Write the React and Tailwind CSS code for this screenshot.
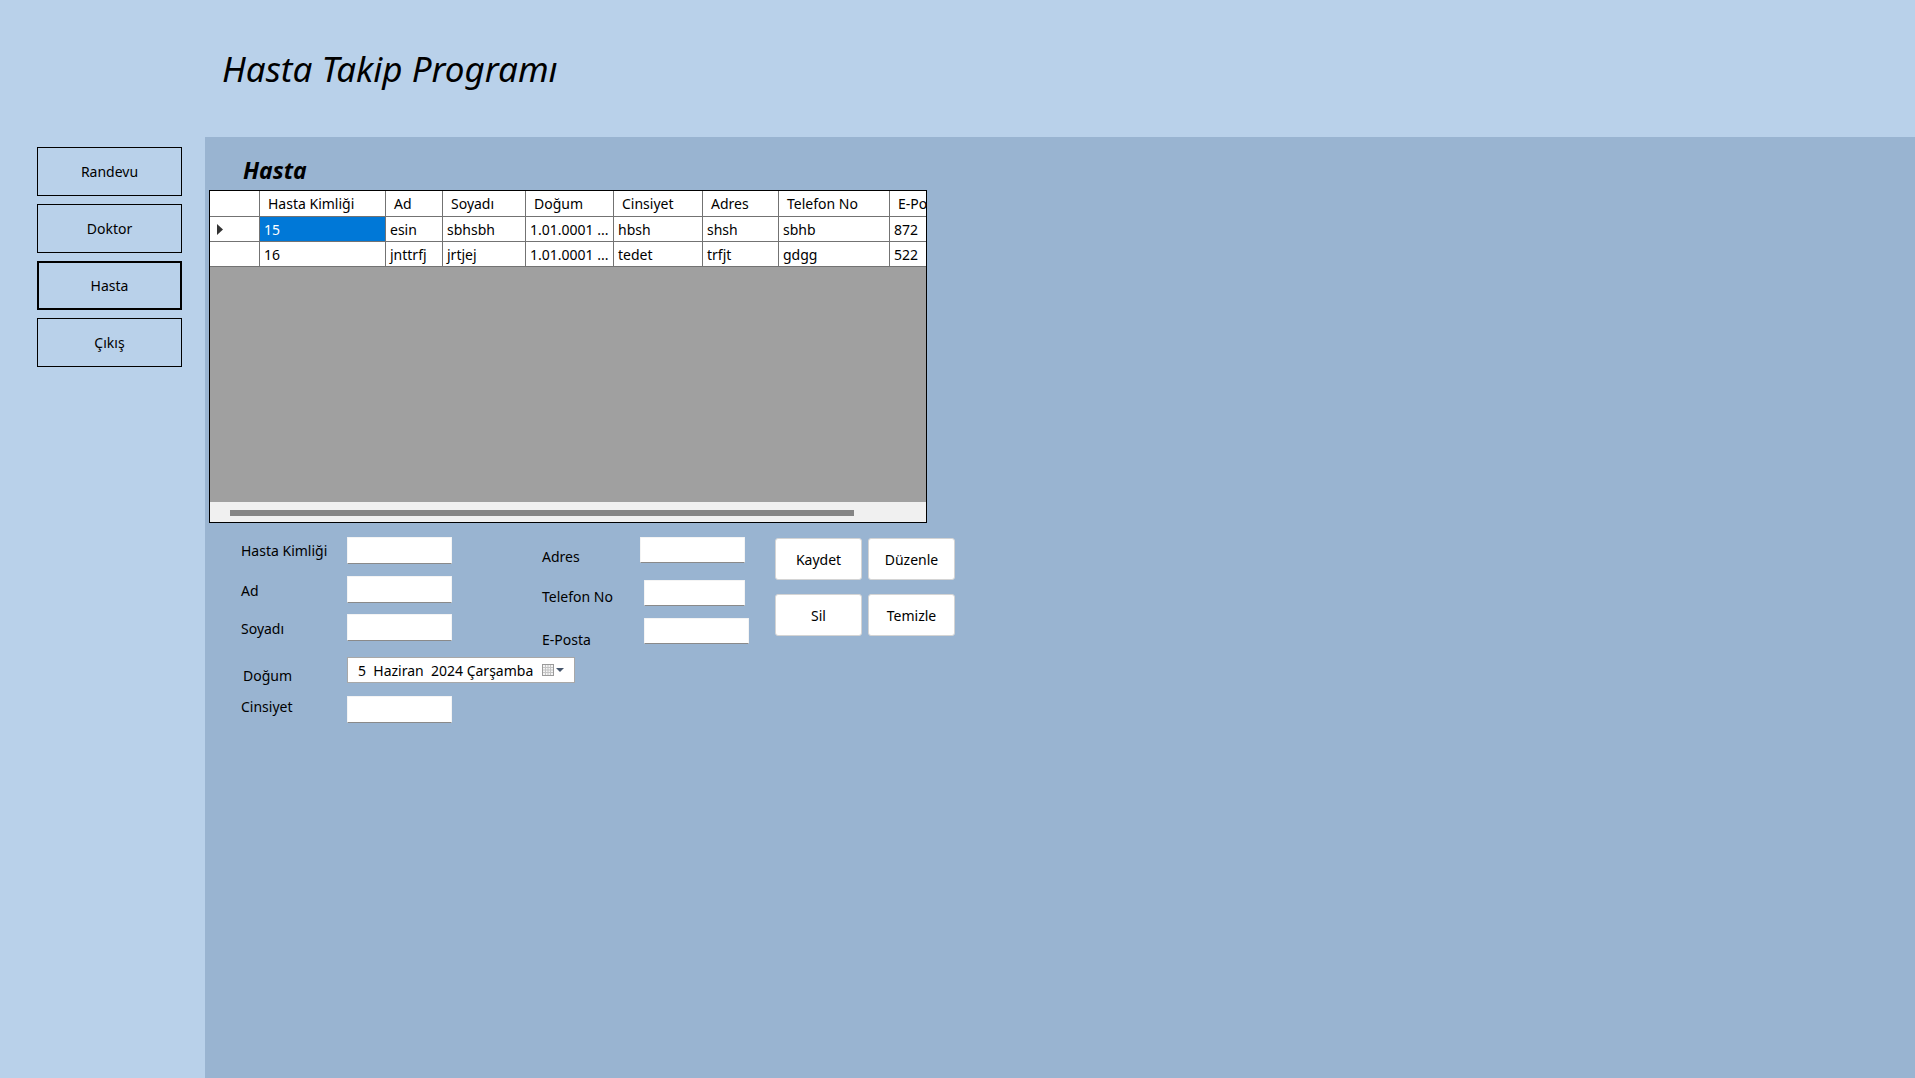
import React from "react";

const cols = [
  { key: "id", label: "Hasta Kimliği", w: 126 },
  { key: "ad", label: "Ad", w: 57 },
  { key: "soyad", label: "Soyadı", w: 83 },
  { key: "dogum", label: "Doğum", w: 88 },
  { key: "cins", label: "Cinsiyet", w: 89 },
  { key: "adres", label: "Adres", w: 76 },
  { key: "tel", label: "Telefon No", w: 111 },
  { key: "mail", label: "E-Posta", w: 100 },
];

const rows = [
  { id: "15", ad: "esin", soyad: "sbhsbh", dogum: "1.01.0001 ...", cins: "hbsh", adres: "shsh", tel: "sbhb", mail: "872" },
  { id: "16", ad: "jnttrfj", soyad: "jrtjej", dogum: "1.01.0001 ...", cins: "tedet", adres: "trfjt", tel: "gdgg", mail: "522" },
];

function NavButton({ children, active }) {
  return (
    <button
      className={
        "w-[145px] h-[49px] flex items-center justify-center text-[14px] text-black bg-transparent " +
        (active ? "border-2 border-black" : "border border-black")
      }
    >
      {children}
    </button>
  );
}

function TextBox({ w = 105, h = 27 }) {
  return (
    <div
      style={{ width: w, height: h }}
      className="bg-white border border-[#f4f4f4] border-b-[#8a8a8a] rounded-[1px] shrink-0"
    />
  );
}

function ActionButton({ children }) {
  return (
    <button className="w-[87px] h-[42px] bg-white border border-[#d4d4d4] rounded-[3px] text-[14px] text-black flex items-center justify-center">
      {children}
    </button>
  );
}

function DataGrid() {
  return (
    <div className="ml-[4px] w-[718px] h-[333px] border border-black bg-white flex flex-col overflow-hidden">
      {/* header */}
      <div className="flex h-[26px] shrink-0 border-b border-[#737373]">
        <div className="w-[50px] shrink-0 border-r border-[#737373]" />
        {cols.map((c) => (
          <div
            key={c.key}
            style={{ width: c.w }}
            className="shrink-0 border-r border-[#737373] pl-[8px] flex items-center whitespace-nowrap overflow-hidden text-[14px]"
          >
            {c.label}
          </div>
        ))}
      </div>
      {rows.map((r, i) => (
        <div key={r.id} className="flex h-[25px] shrink-0 border-b border-[#737373]">
          <div className="w-[50px] shrink-0 border-r border-[#737373] flex items-center pl-[7px]">
            {i === 0 && (
              <svg width="6" height="11" viewBox="0 0 6 11">
                <path d="M0 0 L6 5.5 L0 11 Z" fill="#333" />
              </svg>
            )}
          </div>
          {cols.map((c) => (
            <div
              key={c.key}
              style={{ width: c.w }}
              className={
                "shrink-0 border-r border-[#737373] pl-[4px] flex items-center whitespace-nowrap overflow-hidden text-[14px] " +
                (i === 0 && c.key === "id" ? "bg-[#0078d7] text-white" : "text-black")
              }
            >
              {r[c.key]}
            </div>
          ))}
        </div>
      ))}
      <div className="flex-1 bg-[#a0a0a0]" />
      <div className="h-[20px] shrink-0 bg-[#f0f0f0] pl-[20px] pt-[8px]">
        <div className="w-[624px] h-[6px] bg-[#858585]" />
      </div>
    </div>
  );
}

function CalendarIcon() {
  return (
    <svg width="26" height="14" viewBox="0 0 26 14">
      <rect x="0.5" y="1.5" width="11" height="11" fill="#f4f4f4" stroke="#9a9a9a" />
      <path d="M3.5 2v10M6 2v10M8.5 2v10M1 4.5h10M1 7h10M1 9.5h10" stroke="#c4c4c4" strokeWidth="1" />
      <path d="M14 5 L22 5 L18 9 Z" fill="#44546a" />
    </svg>
  );
}

export default function App() {
  return (
    <div className="w-[1915px] h-[1078px] bg-[#b9d1ea] flex flex-col font-['Noto_Sans',sans-serif] text-black">
      <header className="h-[137px] shrink-0 pl-[222px] pt-[51px]">
        <h1 className="text-[35px] leading-none italic font-normal">Hasta Takip Programı</h1>
      </header>
      <div className="flex flex-1">
        <aside className="w-[205px] shrink-0 pl-[37px] pt-[10px] flex flex-col gap-[8px]">
          <NavButton>Randevu</NavButton>
          <NavButton>Doktor</NavButton>
          <NavButton active>Hasta</NavButton>
          <NavButton>Çıkış</NavButton>
        </aside>
        <main className="flex-1 bg-[#99b4d1] pt-[22px]">
          <h2 className="ml-[38px] text-[23px] leading-none font-bold italic">Hasta</h2>
          <div className="mt-[8px]">
            <DataGrid />
          </div>

          {/* form */}
          <div className="flex items-start mt-[14px] ml-[36px] text-[14px]">
            <div className="w-[301px] shrink-0 flex flex-col">
              <div className="flex items-start h-[27px]">
                <span className="w-[106px] shrink-0 pt-[4px] leading-[20px]">Hasta Kimliği</span>
                <TextBox />
              </div>
              <div className="flex items-start h-[27px] mt-[12px]">
                <span className="w-[106px] shrink-0 pt-[5px] leading-[20px]">Ad</span>
                <TextBox />
              </div>
              <div className="flex items-start h-[27px] mt-[11px]">
                <span className="w-[106px] shrink-0 pt-[5px] leading-[20px]">Soyadı</span>
                <TextBox />
              </div>
              <div className="flex items-start h-[26px] mt-[16px]">
                <span className="w-[106px] shrink-0 pl-[2px] pt-[9px] leading-[20px]">Doğum</span>
                <div className="w-[228px] h-[26px] shrink-0 bg-white border border-[#a8a8a8] flex items-center pl-[10px] pr-[6px]">
                  <span className="whitespace-pre flex-1">5  Haziran  2024 Çarşamba</span>
                  <CalendarIcon />
                </div>
              </div>
              <div className="flex items-start h-[27px] mt-[13px]">
                <span className="w-[106px] shrink-0 pt-[1px] leading-[20px]">Cinsiyet</span>
                <TextBox />
              </div>
            </div>

            <div className="w-[233px] shrink-0 flex flex-col">
              <div className="flex items-start h-[26px]">
                <span className="w-[98px] shrink-0 pt-[10px] leading-[20px]">Adres</span>
                <TextBox h={26} />
              </div>
              <div className="flex items-start h-[26px] mt-[17px]">
                <span className="w-[102px] shrink-0 pt-[7px] leading-[20px]">Telefon No</span>
                <TextBox w={101} h={26} />
              </div>
              <div className="flex items-start h-[26px] mt-[12px]">
                <span className="w-[102px] shrink-0 pt-[12px] leading-[20px]">E-Posta</span>
                <TextBox h={26} />
              </div>
            </div>

            <div className="grid grid-cols-2 gap-x-[6px] gap-y-[14px] mt-[1px]">
              <ActionButton>Kaydet</ActionButton>
              <ActionButton>Düzenle</ActionButton>
              <ActionButton>Sil</ActionButton>
              <ActionButton>Temizle</ActionButton>
            </div>
          </div>
        </main>
      </div>
    </div>
  );
}
